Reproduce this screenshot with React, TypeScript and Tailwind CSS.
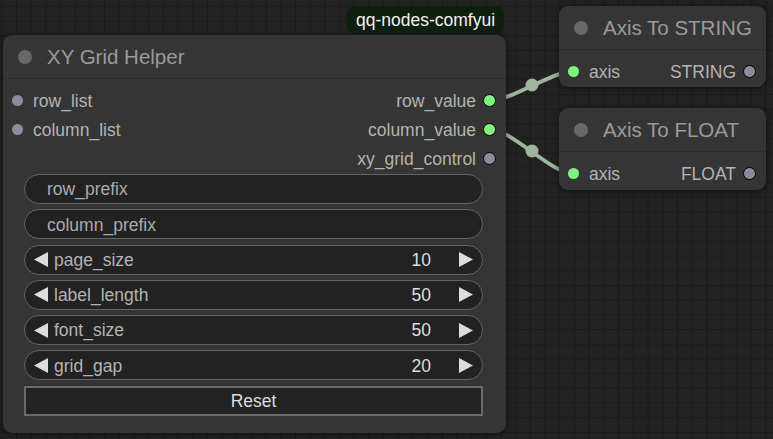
import React from 'react';

const font = { fontFamily: '"Liberation Sans", Arial, sans-serif' };

type Slot = { name: string; color: 'green' | 'gray' } | null;

const Dot = ({ color, ring }: { color: 'green' | 'gray'; ring?: boolean }) => (
    <span
        className={
            'block rounded-full shrink-0 ' +
            (color === 'green' ? 'bg-[#7cf57c] ' : 'bg-[#8d8c9c] ') +
            (ring ? 'w-[13px] h-[13px] border-[1.5px] border-black' : 'w-[11px] h-[11px]')
        }
    />
);

const SlotRow = ({ input, output }: { input: Slot; output: Slot }) => (
    <div className="flex items-center justify-between h-[29px] text-[17.5px] text-[#b3b3b3] leading-none">
        <div className="flex items-center">
            {input && (
                <>
                    <span className="ml-[9px]">
                        <Dot color={input.color} />
                    </span>
                    <span className="ml-[10px] pt-[2px]">{input.name}</span>
                </>
            )}
        </div>
        <div className="flex items-center">
            {output && (
                <>
                    <span className="mr-[7px] pt-[2px]">{output.name}</span>
                    <span className="mr-[10px]">
                        <Dot color={output.color} ring />
                    </span>
                </>
            )}
        </div>
    </div>
);

const Title = ({ text }: { text: string }) => (
    <div className="flex items-center h-[44px] border-b border-[#2c2c2c]">
        <span className="ml-[15px] w-[14px] h-[14px] rounded-full bg-[#686868]" />
        <span className="ml-[15px] mt-[2px] text-[20.5px] text-[#9a9a9a] leading-none">{text}</span>
    </div>
);

const TextWidget = ({ label }: { label: string }) => (
    <div className="flex items-center h-[30px] rounded-full border border-[#646464] bg-[#222222] pl-[22px] pt-[2px] text-[17.5px] text-[#ababab] leading-none">
        {label}
    </div>
);

const NumberWidget = ({ label, value }: { label: string; value: number }) => (
    <div className="flex items-center h-[30px] rounded-full border border-[#646464] bg-[#222222] px-[9px] text-[17.5px] leading-none">
        <svg width="14" height="15" viewBox="0 0 14 15" className="shrink-0">
            <polygon points="14,0 14,15 0,7.5" fill="#dddddd" />
        </svg>
        <span className="ml-[6px] pt-[2px] text-[#b3b3b3]">{label}</span>
        <span className="ml-auto pt-[2px] text-[#dddddd]">{value}</span>
        <svg width="14" height="15" viewBox="0 0 14 15" className="shrink-0 ml-[28px]">
            <polygon points="0,0 0,15 14,7.5" fill="#dddddd" />
        </svg>
    </div>
);

const nodeCls = 'absolute rounded-[9px] bg-[#353535] shadow-[0_1px_6px_rgba(0,0,0,0.55)] overflow-hidden';

export default function App() {
    return (
        <div
            style={font}
            className="relative w-[773px] h-[439px] overflow-hidden bg-[#222222] bg-[linear-gradient(to_right,#1a1a1a_1px,transparent_1px),linear-gradient(to_bottom,#1a1a1a_1px,transparent_1px)] bg-[size:14.7px_14.7px] bg-[position:1.3px_5.9px]"
        >
            <svg className="absolute inset-0" width="773" height="439">
                <path d="M490,100.5 C512,100.5 551,71.5 573,71.5" stroke="#9fb39f" strokeWidth="4" fill="none" />
                <path d="M490,129.5 C512,129.5 551,173.5 573,173.5" stroke="#9fb39f" strokeWidth="4" fill="none" />
                <circle cx="532" cy="85" r="6.5" fill="#9fb39f" />
                <circle cx="532" cy="151" r="6.5" fill="#9fb39f" />
            </svg>

            <div className="absolute left-[347px] top-[6px] w-[157px] h-[28px] rounded-[8px] bg-[#0f1f0f] flex items-center justify-center pt-[2px] text-[17.5px] text-[#f0f0f0] leading-none">
                qq-nodes-comfyui
            </div>

            <div className={nodeCls + ' left-[3px] top-[35px] w-[503px] h-[398px]'}>
                <Title text="XY Grid Helper" />
                <div className="pt-[7px]">
                    <SlotRow input={{ name: 'row_list', color: 'gray' }} output={{ name: 'row_value', color: 'green' }} />
                    <SlotRow input={{ name: 'column_list', color: 'gray' }} output={{ name: 'column_value', color: 'green' }} />
                    <SlotRow input={null} output={{ name: 'xy_grid_control', color: 'gray' }} />
                </div>
                <div className="mt-[1px] ml-[21px] mr-[23px] flex flex-col gap-[5.3px]">
                    <TextWidget label="row_prefix" />
                    <TextWidget label="column_prefix" />
                    <NumberWidget label="page_size" value={10} />
                    <NumberWidget label="label_length" value={50} />
                    <NumberWidget label="font_size" value={50} />
                    <NumberWidget label="grid_gap" value={20} />
                    <button className="h-[30px] border-2 border-[#6a6a6a] bg-[#222222] pt-[2px] text-[17.5px] text-[#dddddd] leading-none">
                        Reset
                    </button>
                </div>
            </div>

            <div className={nodeCls + ' left-[559px] top-[6px] w-[207px] h-[81px]'}>
                <Title text="Axis To STRING" />
                <div className="pt-[7px]">
                    <SlotRow input={{ name: 'axis', color: 'green' }} output={{ name: 'STRING', color: 'gray' }} />
                </div>
            </div>

            <div className={nodeCls + ' left-[559px] top-[108px] w-[207px] h-[82px]'}>
                <Title text="Axis To FLOAT" />
                <div className="pt-[7px]">
                    <SlotRow input={{ name: 'axis', color: 'green' }} output={{ name: 'FLOAT', color: 'gray' }} />
                </div>
            </div>
        </div>
    );
}
